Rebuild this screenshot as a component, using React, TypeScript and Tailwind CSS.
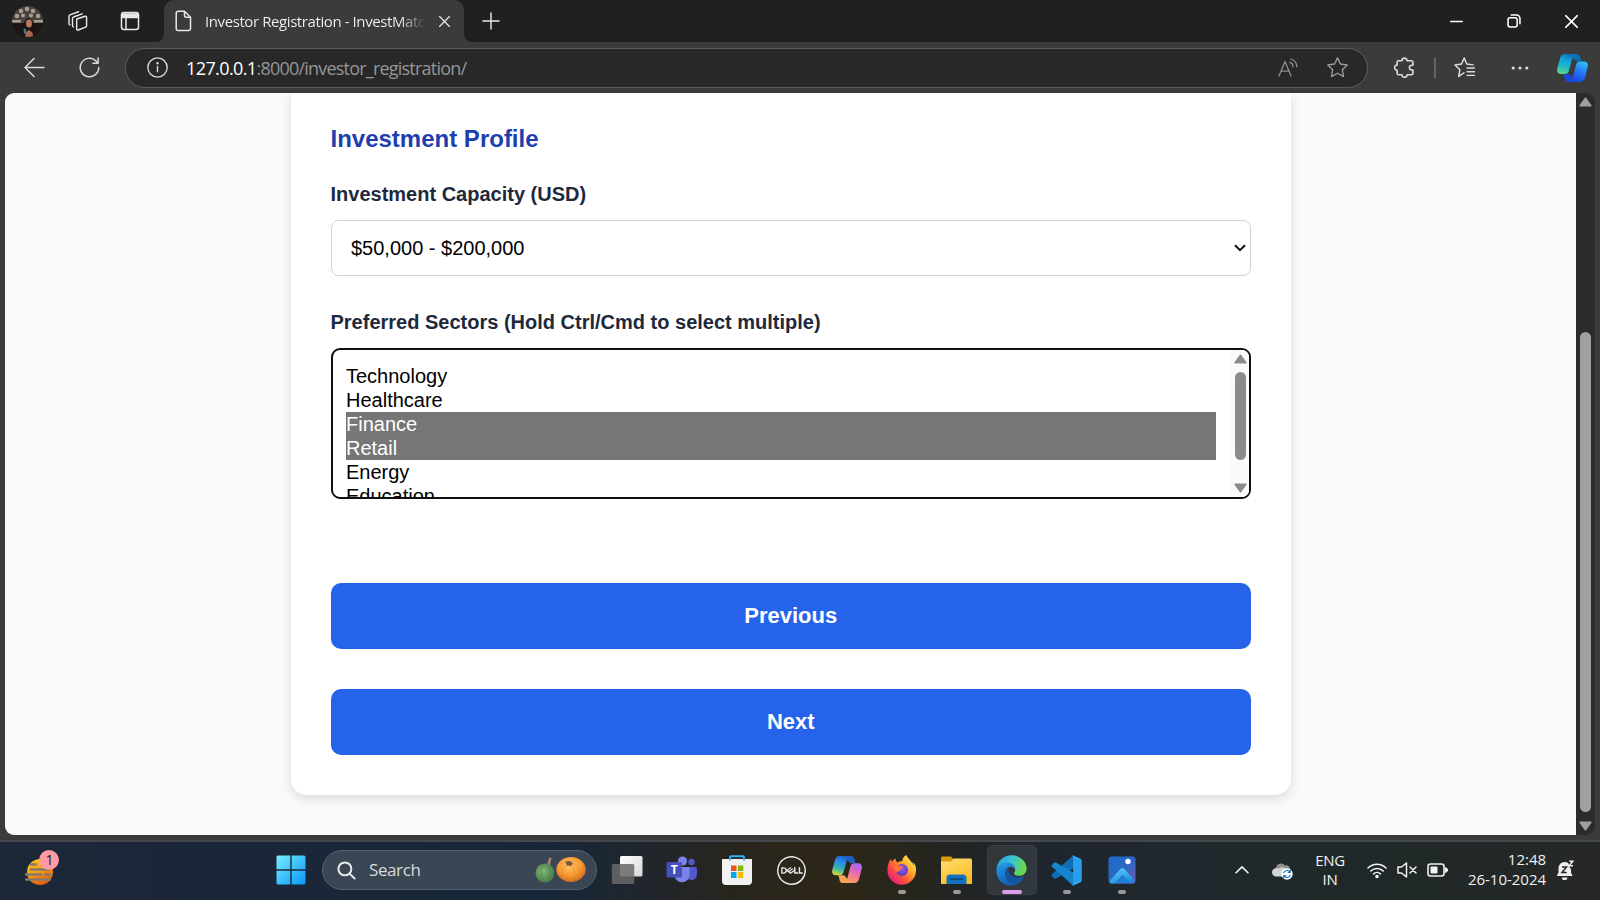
import type { ReactNode } from "react";
import { SiDell } from "react-icons/si";

const UI = "font-['Open_Sans','Noto_Sans',sans-serif]";

function Stroke({ size = 20, w = 1.4, className = "", children }: { size?: number; w?: number; className?: string; children: ReactNode }) {
  return (
    <svg width={size} height={size} viewBox="0 0 20 20" fill="none" stroke="currentColor" strokeWidth={w} strokeLinecap="round" strokeLinejoin="round" className={`shrink-0 ${className}`}>
      {children}
    </svg>
  );
}

const STAR = "M10 .8l2.8 5.9 6.4.9-4.6 4.5 1.1 6.5L10 15.5l-5.7 3.1 1.1-6.5L.8 7.6l6.4-.9z";

function TitleBar() {
  return (
    <div className="flex h-[42px] shrink-0 items-stretch bg-[#202020] text-[#e8e8e8]">
      <div className="flex w-[54px] items-center justify-center">
        <svg width="31" height="31" viewBox="0 0 31 31">
          <defs>
            <clipPath id="avatar"><circle cx="15.5" cy="15.5" r="15.5" /></clipPath>
          </defs>
          <g clipPath="url(#avatar)">
            <rect width="31" height="31" fill="#1c1715" />
            <rect width="31" height="17" fill="#4a433d" />
            <g fill="#a89e92">
              <circle cx="9" cy="5" r="2.2" /><circle cx="15" cy="3" r="2.2" /><circle cx="21" cy="5" r="2.2" />
              <circle cx="5" cy="10" r="2.2" /><circle cx="11" cy="9.5" r="2" /><circle cx="19" cy="9.5" r="2" /><circle cx="26" cy="10" r="2.2" />
              <rect x="0" y="14" width="9" height="2.500" /><rect x="22" y="14" width="9" height="2.500" />
            </g>
            <path d="M11.500 31c-1-8 0-18 5-19 5 1 6 9 5 19z" fill="#1d1311" />
            <ellipse cx="17" cy="17.500" rx="3" ry="4" fill="#b47c60" />
            <path d="M13 31l1-5 3-2 3.500 2.500.500 4.500z" fill="#a8664c" />
            <path d="M11.500 22l2.500 1.500v3.500l-2 1z" fill="#3f7c9c" />
          </g>
        </svg>
      </div>
      <div className="flex w-[48px] items-center justify-center">
        <Stroke size={22} w={1.3}>
          <path d="M9 8.200l7.400-2.500c.7-.2 1.400.3 1.400 1v7.600c0 .6-.4 1.100-.9 1.300l-6.700 2.600c-.7.300-1.400-.2-1.400-1V9.500c0-.6 0-1.100.2-1.300z" />
          <path d="M5.800 15.400c-.6-.2-.8-.6-.8-1.200V7.700c0-.6.400-1.100.9-1.300l7.800-2.900" />
          <path d="M2.600 13.500c-.6-.2-.8-.6-.8-1.200V5.800c0-.6.4-1.100.9-1.300l7.800-2.900" />
        </Stroke>
      </div>
      <div className="flex w-[56px] items-center justify-center">
        <Stroke size={20} w={1.5}>
          <rect x="1.500" y="1.500" width="17" height="17" rx="2.500" />
          <path d="M2 3h16v3.500H2z" fill="currentColor" />
          <path d="M6 6v12" />
        </Stroke>
      </div>
      <div className="relative ml-[6px] flex w-[300px] items-center rounded-t-[10px] bg-[#3b3b3b] pl-[11px] pr-[11px]">
        <svg className="absolute -left-2 bottom-0" width="8" height="8"><path d="M8 0v8H0a8 8 0 0 0 8-8z" fill="#3b3b3b" /></svg>
        <svg className="absolute -right-2 bottom-0" width="8" height="8"><path d="M0 0v8h8a8 8 0 0 1-8-8z" fill="#3b3b3b" /></svg>
        <svg width="17" height="22" viewBox="0 0 17 22" fill="none" stroke="currentColor" strokeWidth="1.500" strokeLinejoin="round" className="shrink-0">
          <path d="M3.200 1.300h6.300l6 6v11.200a2 2 0 0 1-2 2H3.200a2 2 0 0 1-2-2V3.300a2 2 0 0 1 2-2z" />
          <path d="M9.500 1.500v4.300a1.500 1.500 0 0 0 1.500 1.500h4.300" />
        </svg>
        <span className="ml-[13px] w-[226px] whitespace-nowrap bg-linear-to-r from-[#f4f4f4] from-86% to-[#3b3b3b] to-98% bg-clip-text text-[15px] tracking-[-0.41px] text-transparent">
          Investor Registration - InvestMatc
        </span>
        <Stroke size={11} w={2.200} className="ml-auto mr-[3px]"><path d="M1 1l18 18M19 1L1 19" /></Stroke>
      </div>
      <div className="flex w-[53px] items-center justify-center">
        <Stroke size={18} w={1.600}><path d="M10 1v18M1 10h18" /></Stroke>
      </div>
      <div className="ml-auto flex items-center text-white">
        <div className="flex w-[58px] justify-center"><Stroke size={13} w={2.200}><path d="M1 10h18" /></Stroke></div>
        <div className="flex w-[57px] justify-center">
          <Stroke size={14} w={2.200}><rect x="1.500" y="5.500" width="13" height="13" rx="3" /><path d="M6 1.500h7.500a5 5 0 0 1 5 5V14" /></Stroke>
        </div>
        <div className="flex w-[58px] justify-center"><Stroke size={13} w={2.400}><path d="M1 1l18 18M19 1L1 19" /></Stroke></div>
      </div>
    </div>
  );
}

function CopilotMark({ id, w, a, b }: { id: string; w: number; a: string[]; b: string[] }) {
  return (
    <svg width={w} height={(w * 28) / 31} viewBox="0 0 31 28" className="shrink-0">
      <defs>
        <linearGradient id={`${id}a`} x1=".6" y1="0" x2=".3" y2="1">
          {a.map((c, i) => <stop key={c} offset={i / (a.length - 1)} stopColor={c} />)}
        </linearGradient>
        <linearGradient id={`${id}b`} x1=".7" y1="0" x2=".3" y2="1">
          {b.map((c, i) => <stop key={c} offset={i / (b.length - 1)} stopColor={c} />)}
        </linearGradient>
      </defs>
      <path d="M13 0h6.500c2 0 3 1 3.600 3l1.300 4.500h-5L14 3z" fill={a[0]} />
      <path d="M18 28h-6.500c-2 0-3-1-3.600-3L6.600 20h6L17 25z" fill={b[b.length - 1]} />
      <path d="M8 0h11c-2 .4-2.900 1.500-3.500 3.600L12 16.500c-.7 2.400-2 3.500-4.300 3.500H4c-3 0-4.500-2.300-3.700-5.600L3 4.400C3.800 1.500 5.300 0 8 0z" fill={`url(#${id}a)`} />
      <path d="M23 28H12c2-.4 2.900-1.500 3.500-3.600L19 11c.7-2.400 2-3.500 4.300-3.500H27c3 0 4.500 2.300 3.700 5.600l-2.700 10.500c-.8 2.900-2.300 4.400-5 4.400z" fill={`url(#${id}b)`} />
    </svg>
  );
}

function Toolbar() {
  return (
    <div className="flex h-[51px] shrink-0 items-center bg-[#3b3b3b] text-[#dcdcdc]">
      <div className="flex w-[69px] justify-center">
        <Stroke size={21} w={1.400}><path d="M19 10H1M9.500 1.500L1 10l8.500 8.500" /></Stroke>
      </div>
      <div className="flex w-[40px] justify-center">
        <Stroke size={21} w={1.400}><path d="M18.800 10a8.800 8.800 0 1 1-2.600-6.200L18 5.500M18.200 1v5h-5" /></Stroke>
      </div>
      <div className="ml-[16px] flex h-[40px] w-[1243px] items-center rounded-full border-[1.500px] border-[#5b5b5b] bg-[#282828] pl-[21px]">
        <Stroke size={21} w={1.300}><circle cx="10" cy="10" r="9.200" /><path d="M10 9v5" /><circle cx="10" cy="6" r=".5" fill="currentColor" /></Stroke>
        <span className={`ml-[18px] text-[18px] leading-none tracking-[-0.79px] text-[#959595] ${UI}`}>
          <span className="tracking-[-0.6px] text-white">127.0.0.1</span>:8000/investor_registration/
        </span>
        <Stroke size={20} w={1.300} className="ml-auto text-[#8f8f8f]">
          <path d="M1 18L7 3.500 13 18M3 13.200h8" /><path d="M12 4.200a5 5 0 0 1 3 4.600M12.800 1a8.300 8.300 0 0 1 6 7.800" />
        </Stroke>
        <Stroke size={21} w={1.300} className="ml-[29px] mr-[19px] text-[#9a9a9a]"><path d={STAR} /></Stroke>
      </div>
      <div className="ml-[10px] flex w-[53px] justify-center">
        <Stroke size={21} w={1.500}>
          <path d="M4 3.500h3.600a2.400 2.400 0 0 1 4.800 0h4A1.500 1.500 0 0 1 18 5v2.800h-1a2.300 2.300 0 0 0 0 4.600h1v3a1.500 1.500 0 0 1-1.500 1.500h-4a2.400 2.400 0 0 1-4.900 0H4.500A1.500 1.500 0 0 1 3 15.400v-2.800a2.400 2.400 0 0 1 0-4.900V5a1.400 1.400 0 0 1 1-1.500z" />
        </Stroke>
      </div>
      <div className="ml-[3px] h-5 w-[1.500px] bg-[#626262]" />
      <div className="ml-[4px] flex w-[50px] justify-center">
        <Stroke size={21} w={1.400}>
          <path d="M9.500 15L4.500 18.500l1.100-6.400L1 7.600l6.200-.9L9.700.9l2.500 5.800 6 .8" /><path d="M12.500 10.500h7M12.500 14h7M12.500 17.500h7" />
        </Stroke>
      </div>
      <div className="ml-[5px] flex w-[50px] justify-center">
        <Stroke size={18}><g fill="currentColor" stroke="none"><circle cx="2.500" cy="10" r="1.800" /><circle cx="10" cy="10" r="1.800" /><circle cx="17.500" cy="10" r="1.800" /></g></Stroke>
      </div>
      <div className="ml-auto mr-[12px]">
        <CopilotMark id="cpt" w={31} a={["#0a6fb8", "#12a5e0", "#22b9c0", "#5fd68a"]} b={["#2cc0f5", "#2a8cf5", "#1d62f0", "#1848d8"]} />
      </div>
    </div>
  );
}

function Arrow({ down = false, color, className = "" }: { down?: boolean; color: string; className?: string }) {
  return (
    <svg width="13" height="10" viewBox="0 0 12 9" className={`shrink-0 ${down ? "rotate-180" : ""} ${className}`}>
      <path d="M6 1l5 7H1z" fill={color} stroke={color} strokeWidth="1.400" strokeLinejoin="round" />
    </svg>
  );
}

const SECTORS = ["Technology", "Healthcare", "Finance", "Retail", "Energy", "Education"];
const SELECTED = ["Finance", "Retail"];

function FormCard() {
  return (
    <div className="ml-[286px] h-[702px] w-[1000px] rounded-b-[16px] bg-white pr-10 pl-[39.500px] pt-[32px] font-['Liberation_Sans',Arial,sans-serif] shadow-[0_4px_12px_rgba(0,0,0,0.12)]">
      <h2 className="text-[24px] leading-[28px] font-bold text-[#1e40af]">Investment Profile</h2>
      <div className="mt-[29px] text-[20px] leading-[24px] font-bold text-[#1e293b]">Investment Capacity (USD)</div>
      <div className="mt-[14px] flex h-[56px] items-center justify-between rounded-lg border border-[#cbd5e1] pr-[4px] pl-[19.500px] text-[20px] text-black">
        <span>$50,000 - $200,000</span>
        <svg width="12" height="8" viewBox="0 0 12 8" fill="none" stroke="#111" strokeWidth="2"><path d="M1 1.200l5 5 5-5" /></svg>
      </div>
      <div className="mt-[34px] text-[20px] leading-[24px] font-bold text-[#1e293b]">Preferred Sectors (Hold Ctrl/Cmd to select multiple)</div>
      <div className="mt-[14px] flex h-[151px] overflow-hidden rounded-[9px] border-2 border-[#101010]">
        <div className="flex-1 pt-[14px] pr-[15px] pl-[13.500px]">
          {SECTORS.map((s) => (
            <div key={s} className={`h-[24px] text-[20px] leading-[24px] ${SELECTED.includes(s) ? "bg-[#767676] text-white" : "text-black"}`}>{s}</div>
          ))}
        </div>
        <div className="flex w-[18px] flex-col items-center bg-[#fafafa] pt-[4px] pb-[4px]">
          <Arrow color="#8b8b8b" />
          <div className="mt-2 h-[88px] w-[11px] rounded-full bg-[#8b8b8b]" />
          <Arrow down color="#8b8b8b" className="mt-auto" />
        </div>
      </div>
      <div className="mt-[84px] flex h-[66px] items-center justify-center rounded-[10px] bg-[#2563eb] pb-[2px] text-[22px] font-bold text-white">Previous</div>
      <div className="mt-[40px] flex h-[66px] items-center justify-center rounded-[10px] bg-[#2563eb] pb-[2px] text-[22px] font-bold text-white">Next</div>
    </div>
  );
}

function TaskIcon({ children, dot = false, active = false }: { children: ReactNode; dot?: boolean; active?: boolean }) {
  return (
    <div className="flex w-[55px] justify-center">
      <div className={`relative flex h-[50px] w-[50px] items-center justify-center rounded-[6px] ${active ? "border border-white/5 bg-white/8" : ""}`}>
        {children}
        {dot && <span className="absolute bottom-[1px] h-1 w-2 rounded-full bg-[#9a9a9a]" />}
        {active && <span className="absolute bottom-0 h-1 w-5 rounded-full bg-[#dc9ee6]" />}
      </div>
    </div>
  );
}

function Gradient({ id, stops, x2 = 0, y2 = 1 }: { id: string; stops: string[]; x2?: number; y2?: number }) {
  return (
    <linearGradient id={id} x1="0" y1="0" x2={x2} y2={y2}>
      {stops.map((c, i) => <stop key={c} offset={i / (stops.length - 1)} stopColor={c} />)}
    </linearGradient>
  );
}

function Taskbar() {
  return (
    <div className={`flex h-[60px] shrink-0 items-center border-t-2 border-[#45494d] bg-[linear-gradient(90deg,#1c2738_0%,#1a2738_20%,#172739_34%,#20262e_40%,#28251d_46%,#2e2718_53%,#25251f_58%,#1f262e_64%,#1f282c_75%,#202828_88%,#262827_100%)] pb-[2px] text-[#f2f2f2] ${UI}`}>
      <div className="flex w-[84px] justify-center pb-[4px]">
        <svg width="34" height="36" viewBox="0 0 34 36">
          <defs><Gradient id="sun" x2={0.5} stops={["#ffc61a", "#f6a515", "#e65f10"]} /></defs>
          <circle cx="15" cy="22" r="13" fill="url(#sun)" />
          <path d="M6 14.500h5M6 19.500h18M1 24.500h15M20 24.500h5M1 29.500h24" stroke="#85796c" strokeWidth="2.400" strokeLinecap="round" />
          <circle cx="24" cy="10" r="10" fill="#ff99a4" />
          <text x="24.500" y="14.500" textAnchor="middle" fontSize="14" fill="#1a1a1a">1</text>
        </svg>
      </div>
      <div className="ml-[179px] flex w-[56px] justify-center">
        <svg width="30" height="30" viewBox="0 0 30 30">
          <defs><linearGradient id="win" gradientUnits="userSpaceOnUse" x1="0" y1="0" x2="30" y2="30"><stop offset="0" stopColor="#7df0ff" /><stop offset=".5" stopColor="#3cc2fb" /><stop offset="1" stopColor="#0a93fb" /></linearGradient></defs>
          <path d="M2 .5h12.300v13.800H.5V2A1.500 1.500 0 0 1 2 .5zM15.700.5H28A1.500 1.500 0 0 1 29.500 2v12.300H15.700zM.5 15.700h13.800v13.800H2A1.500 1.500 0 0 1 .5 28zM15.700 15.700h13.800V28a1.500 1.500 0 0 1-1.500 1.500H15.700z" fill="url(#win)" />
        </svg>
      </div>
      <div className="ml-[3px] flex h-[40px] w-[275px] items-center rounded-full border border-[#556270] bg-[#3a4653] pl-[14px]">
        <Stroke size={19} w={2.100} className="text-[#e6e9ec]"><circle cx="8.300" cy="8.300" r="6.800" /><path d="M13.300 13.300l5.200 5.200" /></Stroke>
        <span className="ml-[13px] text-[17px] tracking-[-0.4px] text-[#d6dade]">Search</span>
        <svg width="51" height="28" viewBox="0 0 51 28" className="ml-auto mr-[10px]">
          <defs>
            <radialGradient id="pk" cx=".45" cy=".35" r=".7"><stop offset="0" stopColor="#ffc566" /><stop offset=".55" stopColor="#f79a33" /><stop offset="1" stopColor="#c9611a" /></radialGradient>
            <radialGradient id="pg" cx=".4" cy=".4" r=".7"><stop offset="0" stopColor="#83b878" /><stop offset="1" stopColor="#3c7441" /></radialGradient>
          </defs>
          <path d="M12 9c1-2 1-5 2.500-7.500l2 .5C15.500 5 15 8 15 10z" fill="#a5876c" />
          <ellipse cx="10" cy="17" rx="9.500" ry="9.500" fill="url(#pg)" />
          <path d="M9 8c-4 5-3 14 1 18M12 8c4 5 3 14-1 18" stroke="#4a8450" fill="none" strokeWidth=".7" />
          <ellipse cx="36" cy="13.500" rx="14.700" ry="12.500" fill="url(#pk)" />
          <path d="M34 8c-8 3-9 12-2 17.500M36 9c5 5 4 12 0 17M38 8c8 3 9 11 3 17" stroke="#e38a30" fill="none" strokeWidth=".8" />
          <path d="M30 5.500l5-.5 3 2-2 3-4-.5z" fill="#7b573a" />
        </svg>
      </div>
      <div className="ml-[2px] flex items-center">
        <TaskIcon>
          <svg width="32" height="30" viewBox="0 0 32 30">
            <defs><Gradient id="tv" x2={1} stops={["#ffffff", "#d7d7d7"]} /></defs>
            <rect x="9" y="1" width="22.500" height="20.500" rx="1.500" fill="url(#tv)" />
            <rect x=".8" y="9" width="22.500" height="20" rx="1.500" fill="#696969" opacity=".85" />
          </svg>
        </TaskIcon>
        <TaskIcon>
          <svg width="31" height="28" viewBox="0 0 31 28">
            <circle cx="25.500" cy="6" r="3.200" fill="#5059c9" /><path d="M20 11h9.500c.8 0 1.500.6 1.500 1.500v6a5.500 5.500 0 0 1-9 4.200z" fill="#5059c9" />
            <circle cx="16.500" cy="5" r="4.600" fill="#7b83eb" /><path d="M9 11h13c.9 0 1.500.7 1.500 1.600V19a7.500 7.500 0 0 1-14.800 1.500z" fill="#7b83eb" />
            <rect x=".5" y="6" width="15.500" height="15.500" rx="1.500" fill="#4650bc" />
            <text x="8.200" y="18" textAnchor="middle" fontSize="12" fontWeight="700" fill="#fff">T</text>
          </svg>
        </TaskIcon>
        <TaskIcon>
          <svg width="30" height="30" viewBox="0 0 30 30">
            <path d="M8 7V2.300c0-.6.400-1 1-1h12c.6 0 1 .4 1 1V7" fill="none" stroke="#2bb4f5" strokeWidth="2" />
            <path d="M0 4h7v1.500h2V4h12v1.500h2V4h7v22a4 4 0 0 1-4 4H4a4 4 0 0 1-4-4z" fill="#f1f1f1" />
            <path d="M9 10.500h5.500V16H9z" fill="#f25022" /><path d="M15.800 10.500h5.500V16h-5.500z" fill="#7fba00" /><path d="M9 17h5.500v6H9z" fill="#00a4ef" /><path d="M15.800 17h5.500v6h-5.500z" fill="#ffb900" />
          </svg>
        </TaskIcon>
        <TaskIcon><SiDell size={29} color="#ececec" /></TaskIcon>
        <TaskIcon><CopilotMark id="cpb" w={30} a={["#1c5fc0", "#2a8cf0", "#2fb7a8", "#e0d43c"]} b={["#a66cf5", "#d866c0", "#f58088", "#f5a45c"]} /></TaskIcon>
        <TaskIcon dot>
          <svg width="30" height="30" viewBox="0 0 30 30">
            <defs>
              <linearGradient id="ff" x1=".9" y1=".1" x2=".1" y2=".9"><stop offset="0" stopColor="#fff44f" /><stop offset=".35" stopColor="#ffa22e" /><stop offset=".65" stopColor="#ff4f3f" /><stop offset="1" stopColor="#e31587" /></linearGradient>
              <radialGradient id="ffg" cx=".5" cy=".4" r=".6"><stop offset="0" stopColor="#9059ff" /><stop offset="1" stopColor="#5b3bb5" /></radialGradient>
            </defs>
            <path d="M28.500 11c-.6-1.500-1.900-3.200-3-3.700.9 1.700 1.300 2.800 1.300 3.500C25 6.500 22 4.800 19.700 1c-.4-.6-.4-.9-.5-1-3 1.700-3.900 4.500-4 6-2.300.1-3.700.9-4.700 1.600C9 6.500 8.500 5 8.600 3.500 6.700 4.400 5.500 6 5 6.700 4.200 6 4 4.500 4 4 2 6 .4 10 .4 15.500a14.300 14.300 0 0 0 28.600 0c0-1.500 0-3-.5-4.500z" fill="url(#ff)" />
            <circle cx="15" cy="15" r="6" fill="url(#ffg)" />
            <path d="M6 12c2-2 5-2.500 7-1 1.500.2 3 .2 3.500.7-.5 1.300-2 1.800-3 2.500-.3 1.500-2 2.500-3.500 2.800C7.500 16 6.500 14 6 12z" fill="#ff7139" />
          </svg>
        </TaskIcon>
        <TaskIcon dot>
          <svg width="31" height="28" viewBox="0 0 31 28">
            <defs><Gradient id="fo" stops={["#ffdf70", "#f9bd29"]} x2={0.5} /></defs>
            <path d="M0 2A1.500 1.500 0 0 1 1.500.5H10l3 3-2 4H0z" fill="#dc9a10" />
            <path d="M0 5.500h10l3-3h16.500A1.500 1.500 0 0 1 31 4v24H0z" fill="url(#fo)" />
            <path d="M5.500 28v-6a3.500 3.500 0 0 1 3.500-3.500h13a3.500 3.500 0 0 1 3.500 3.500v6z" fill="#1572be" />
            <path d="M9.500 23h12" stroke="#0c4f86" strokeWidth="1.800" strokeLinecap="round" />
          </svg>
        </TaskIcon>
        <TaskIcon active>
          <svg width="31" height="31" viewBox="0 0 31 31">
            <defs>
              <Gradient id="e1" x2={1} y2={0.3} stops={["#2496dc", "#38c3d8", "#68d84f"]} />
              <Gradient id="e2" x2={0.3} stops={["#2aa4e8", "#1b7fd4", "#1263b4"]} />
            </defs>
            <path d="M.5 14C1.500 6 7.500.3 15.500.3 24 .3 30.700 6.500 30.700 13.500c0 4.500-3.500 7.300-7.700 7.300-3.300 0-5-1.200-5-2.400 0-.8 1.200-1.500 1.200-3.600 0-3.200-3-6-7-6C7 8.800 2.500 11 .5 14z" fill="url(#e1)" />
            <path d="M.4 14.500C2 10 6.500 7.200 11 7.200c4.500 0 8.200 2.800 8.200 7.600-1-2-2.700-3-4.500-3-3.200 0-5.500 3-5.500 6.500 0 6 4.500 10.500 9.300 11.900C8 32.500 0 25 .4 14.500z" fill="url(#e2)" />
            <path d="M9.500 17c0-2 1.200-3.800 2.800-4.800-.6 6 4 10.300 9 10.300 3 0 5.200-.8 6.400-1.500.6-.3 1 .2.700.8-2 4.500-6.500 8.700-11.500 8.700C12 28 9.500 22 9.500 17z" fill="#15549f" />
          </svg>
        </TaskIcon>
        <TaskIcon dot>
          <svg width="31" height="31" viewBox="0 0 31 31">
            <path d="M22 .6L30 4v5L5 23.500c-.5.400-1.200.4-1.700 0L1 21.300c-.6-.5-.6-1.400 0-2z" fill="#0f6fb4" />
            <path d="M22 30.400L30 27v-5L5 7.500c-.5-.4-1.200-.4-1.700 0L1 9.700c-.6.5-.6 1.400 0 2z" fill="#1785cd" />
            <path d="M22 .6l7.500 3.200c.6.300 1 .9 1 1.500v20.400c0 .6-.4 1.200-1 1.500L22 30.400c-.8.300-1.600.1-2-.5 1 .7 2.400.1 2.400-1.200V2.300C22.400 1 21 .4 20 1.100c.4-.6 1.200-.8 2-.5z" fill="#33a8f0" />
            <path d="M22.400 3v25l6.800-2.500c.8-.3 1.300-.8 1.300-1.500V6c0-.8-.5-1.300-1.300-1.500z" fill="#2a9fe9" />
          </svg>
        </TaskIcon>
        <TaskIcon dot>
          <svg width="28" height="28" viewBox="0 0 28 28">
            <defs><Gradient id="ph" x2={1} stops={["#1c6ccc", "#2a68c4", "#7a55b4"]} /><Gradient id="mt" x2={0.5} stops={["#5fd0fa", "#1a8fe0"]} /><clipPath id="phc"><rect x=".5" y=".5" width="27" height="27" rx="3" /></clipPath></defs>
            <rect x=".5" y=".5" width="27" height="27" rx="3" fill="url(#ph)" />
            <g clipPath="url(#phc)">
              <path d="M6 28l10-9 10 9z" fill="#1d7fd6" />
              <path d="M2 24.500L12.500 13a2.800 2.800 0 0 1 4 0L27 24.500l-3.500 2.500-9-8L6 28H2z" fill="url(#mt)" />
            </g>
            <circle cx="20" cy="5.500" r="2.700" fill="#fff" />
          </svg>
        </TaskIcon>
      </div>
      <div className="ml-[73px] flex w-[40px] justify-center"><Stroke size={14} w={2.300}><path d="M1.500 14L10 5.500l8.500 8.500" /></Stroke></div>
      <div className="flex w-[40px] justify-center">
        <svg width="21" height="18" viewBox="0 0 21 18" className="mt-[2px]">
          <path d="M4 6.500A5 5 0 0 1 13 3.500a4 4 0 0 1 5 5L10 15z" fill="#8f8f8f" />
          <path d="M4.500 14.500A4.200 4.200 0 1 1 6.500 6.800 5 5 0 0 1 14 14.500z" fill="#d4d4d4" />
          <circle cx="15" cy="12" r="5.700" fill="#fff" />
          <path d="M11.500 11a3.600 3.600 0 0 1 6.500-.8M18.500 13a3.600 3.600 0 0 1-6.500.8M18.200 8v2.500h-2.500M11.800 16v-2.500h2.500" stroke="#1673c8" fill="none" strokeWidth="1.200" />
        </svg>
      </div>
      <div className="w-[56px] text-center text-[15px] leading-[19px] tracking-[-0.3px]">ENG<br />IN</div>
      <div className="ml-[3px] flex w-[32px] justify-center">
        <Stroke size={20} w={1.600}><path d="M1 8a12.700 12.700 0 0 1 18 0M3.800 11a8.800 8.800 0 0 1 12.400 0M6.700 13.900a4.700 4.700 0 0 1 6.600 0" /><circle cx="10" cy="16.500" r="1" fill="currentColor" /></Stroke>
      </div>
      <div className="flex w-[28px] justify-center">
        <Stroke size={20} w={1.500}><path d="M1 7h3.500L9.500 3v14l-5-4H1zM13 7l6 6M19 7l-6 6" /></Stroke>
      </div>
      <div className="flex w-[32px] justify-center">
        <svg width="21" height="14" viewBox="0 0 21 14"><rect x="1" y="1" width="16" height="12" rx="2.500" fill="none" stroke="currentColor" strokeWidth="1.600" /><rect x="3.500" y="3.500" width="7" height="7" rx=".8" fill="currentColor" /><path d="M18.500 4.500v5l2-1.500V6z" fill="currentColor" stroke="currentColor" strokeLinejoin="round" /></svg>
      </div>
      <div className="w-[93px] pb-[2px] text-right text-[15px] leading-[20px] tracking-[-0.02px] whitespace-nowrap">12:48<br />26-10-2024</div>
      <div className="flex w-[38px] justify-center">
        <svg width="18" height="20" viewBox="0 0 18 20">
          <path d="M8.500 2a6 6 0 0 0-6 6v4.500L.8 16h15.800L15 12.500V8a6 6 0 0 0-6.500-6z" fill="#efefef" />
          <path d="M5.800 17.500h5.600a2.800 2.800 0 0 1-5.600 0z" fill="#efefef" />
          <path d="M11.500 0H18v8.500h-4z" fill="#232827" />
          <path d="M13.200 1.300h3.600l-3.600 4.500h3.800" stroke="#efefef" strokeWidth="1.400" fill="none" />
          <path d="M6 7h4.500l-4.500 5.500h4.700" stroke="#232827" strokeWidth="1.500" fill="none" />
        </svg>
      </div>
    </div>
  );
}

export default function App() {
  return (
    <div className="flex h-[900px] w-[1600px] flex-col overflow-hidden bg-[#3b3b3b]">
      <div className={UI}><TitleBar /></div>
      <Toolbar />
      <div className="mx-[5px] mb-[5px] flex h-[742px] shrink-0 overflow-hidden rounded-[9px]">
        <div className="w-[1571px] bg-[#f8fafc]"><FormCard /></div>
        <div className="flex flex-1 flex-col items-center bg-[#2b2b2b] pt-[4px] pb-[4px]">
          <Arrow color="#a0a0a0" />
          <div className="mt-[225px] h-[480px] w-[11px] rounded-full bg-[#a0a0a0]" />
          <Arrow down color="#a0a0a0" className="mt-auto" />
        </div>
      </div>
      <Taskbar />
    </div>
  );
}
